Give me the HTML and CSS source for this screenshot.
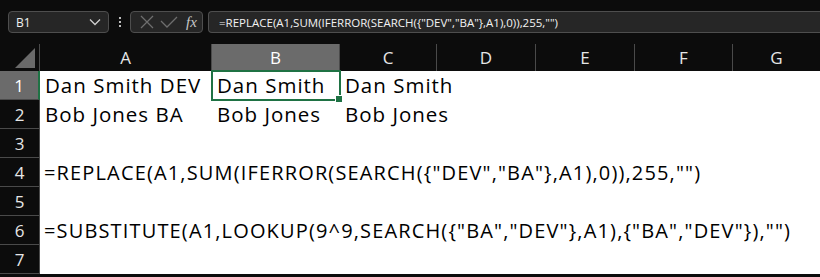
FILE: index.html
```html
<!DOCTYPE html>
<html>
    <head>
        <meta charset="utf-8"/>
        <link rel="stylesheet" href="styles.css">
    </head>
    <body>
        <!-- name box, fx buttons and formula bar -->
        <div class="topbar">
            <div class="namebox">
                <span>B1</span>
                <svg width="12" height="8" viewBox="0 0 12 8"><path d="M1 1.5 L6 6.5 L11 1.5" fill="none" stroke="#cfcfcf" stroke-width="1.3"/></svg>
            </div>
            <div class="dots"><i></i><i></i><i></i></div>
            <div class="fxbox">
                <svg width="16" height="16" viewBox="0 0 16 16"><path d="M2 2 L14 14 M14 2 L2 14" stroke="#6e6e6e" stroke-width="1.3"/></svg>
                <svg width="18" height="14" viewBox="0 0 18 14"><path d="M1 6 L7 12 L17 2" fill="none" stroke="#6e6e6e" stroke-width="1.3"/></svg>
                <span class="fx">fx</span>
            </div>
            <div class="formulabar">=REPLACE(A1,SUM(IFERROR(SEARCH({"DEV","BA"},A1),0)),255,"")</div>
        </div>

        <!-- the sheet -->
        <div class="sheet">
            <div class="corner"><div class="tri"></div></div>
            <div class="colhead">A</div>
            <div class="colhead sel">B</div>
            <div class="colhead">C</div>
            <div class="colhead">D</div>
            <div class="colhead">E</div>
            <div class="colhead">F</div>
            <div class="colhead last">G</div>

            <div class="rowhead sel">1</div>
            <div class="cell">Dan Smith DEV</div>
            <div class="cell active">Dan Smith<span class="handle"></span></div>
            <div class="cell">Dan Smith</div>
            <div class="cell span4"></div>

            <div class="rowhead">2</div>
            <div class="cell">Bob Jones BA</div>
            <div class="cell">Bob Jones</div>
            <div class="cell">Bob Jones</div>
            <div class="cell span4"></div>

            <div class="rowhead">3</div>
            <div class="cell span7"></div>

            <div class="rowhead">4</div>
            <div class="cell span7 long">=REPLACE(A1,SUM(IFERROR(SEARCH({"DEV","BA"},A1),0)),255,"")</div>

            <div class="rowhead">5</div>
            <div class="cell span7"></div>

            <div class="rowhead">6</div>
            <div class="cell span7 long">=SUBSTITUTE(A1,LOOKUP(9^9,SEARCH({"BA","DEV"},A1),{"BA","DEV"}),"")</div>

            <div class="rowhead">7</div>
            <div class="cell span7"></div>
        </div>
    </body>
</html>
```
FILE: styles.css
```css
/* whole page is the dark excel window */
body {
    margin: 0;
    background-color: #0c0c0c;
    font-family: "Open Sans", "Noto Sans", sans-serif;
    overflow: hidden;
}

/* top strip with name box and formula bar */
.topbar {
    display: flex;
    align-items: center;
    height: 44px;
    padding: 0 0 0 8px;
    box-sizing: border-box;
}

.namebox {
    display: flex;
    align-items: center;
    justify-content: space-between;
    width: 101px;
    height: 22px;
    box-sizing: border-box;
    padding: 0 7px 0 7px;
    background-color: #262626;
    border: 1px solid #4e4e4e;
    border-radius: 4px;
    color: #f0f0f0;
    font-size: 12px;
}

.dots {
    display: flex;
    flex-direction: column;
    gap: 2px;
    margin: 0 9px 0 10px;
}

.dots i {
    display: block;
    width: 2px;
    height: 2px;
    background-color: #bdbdbd;
}

.fxbox {
    display: flex;
    align-items: center;
    width: 73px;
    height: 22px;
    box-sizing: border-box;
    padding: 0 4px 0 8px;
    gap: 5px;
    background-color: #262626;
    border: 1px solid #4e4e4e;
    border-radius: 4px;
}

.fx {
    font-family: "Liberation Serif", serif;
    font-style: italic;
    color: #c8c8c8;
    font-size: 15px;
    margin-left: 3px;
}

.formulabar {
    flex: 1;
    height: 22px;
    margin-left: 5px;
    box-sizing: border-box;
    padding: 3px 0 0 10px;
    background-color: #262626;
    border: 1px solid #4e4e4e;
    border-right: none;
    border-radius: 4px 0 0 4px;
    color: #f2f2f2;
    font-size: 11.5px;
    white-space: nowrap;
}

/* sheet grid: white paper, headers paint over it */
.sheet {
    display: grid;
    grid-template-columns: 40px 172px 128px 97px 99px 99px 98px 1fr;
    grid-template-rows: 27px repeat(7, 29px);
    background-color: #ffffff;
}

.corner {
    position: relative;
    background-color: #0c0c0c;
    border-right: 1px solid #4a4a4a;
}

.corner .tri {
    position: absolute;
    right: 4px;
    bottom: 3px;
    width: 0;
    height: 0;
    border-left: 20px solid transparent;
    border-bottom: 20px solid #6a6a6a;
}

.colhead {
    display: flex;
    align-items: center;
    justify-content: center;
    color: #e6e6e6;
    font-size: 17px;
    border-right: 1px solid #4a4a4a;
    background-color: #0c0c0c;
}

.colhead.last {
    border-right: none;
}

.colhead.sel {
    background-color: #6b6b6b;
    color: #ffffff;
}

.rowhead {
    display: flex;
    align-items: center;
    justify-content: center;
    color: #e6e6e6;
    font-size: 17px;
    background-color: #0c0c0c;
    border-bottom: 1px solid #4a4a4a;
    border-right: 1px solid #4a4a4a;
    box-sizing: border-box;
}

.rowhead.sel {
    background-color: #6b6b6b;
    color: #ffffff;
    border-right: 2px solid #1f7244;
}

/* cells are see-through so long text spills into the next one */
.cell {
    position: relative;
    color: #000000;
    font-size: 20.5px;
    letter-spacing: 1px;
    padding: 0 0 0 5px;
    white-space: nowrap;
    line-height: 29px;
}

.span4 {
    grid-column: span 4;
}

.span7 {
    grid-column: span 7;
}

.long {
    padding-left: 4px;
    font-size: 20px;
    letter-spacing: 1.15px;
}

.active {
    outline: 2px solid #1f7244;
    outline-offset: -1px;
    z-index: 1;
}

.handle {
    position: absolute;
    right: -3px;
    bottom: -3px;
    width: 6px;
    height: 6px;
    background-color: #1f7244;
    border: 1px solid #ffffff;
}
```
